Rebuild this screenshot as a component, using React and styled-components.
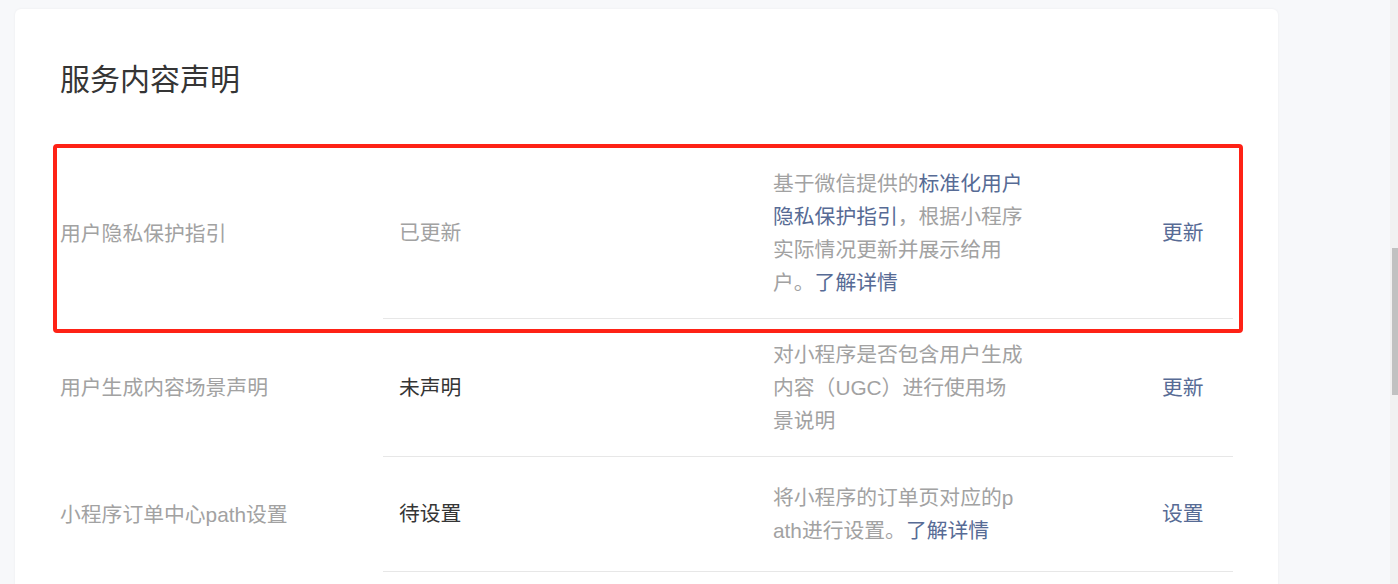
import React from 'react';
import styled, { createGlobalStyle } from 'styled-components';

const GlobalStyle = createGlobalStyle`
  html, body {
    margin: 0;
    padding: 0;
    height: 584px;
    overflow: hidden;
    background: #f7f8fa;
    font-family: "Liberation Sans", "Noto Sans CJK SC", sans-serif;
  }
`;

const Page = styled.div`
  display: flex;
  height: 584px;
`;

const Main = styled.div`
  flex: 1;
  padding: 9px 112px 0 15px;
  overflow: hidden;
`;

const ScrollTrack = styled.div`
  width: 8px;
  background: #f1f1f1;
  display: flex;
  flex-direction: column;
  align-items: flex-end;
  padding-top: 248px;
`;

const ScrollThumb = styled.div`
  width: 6px;
  height: 147px;
  background: #c1c1c1;
`;

const Card = styled.div`
  background: #fff;
  border-radius: 6px;
  box-shadow: 0 0 3px rgba(0, 0, 0, 0.05);
  padding: 45px 45px 40px 45px;
  min-height: 700px;
`;

const Title = styled.h2`
  margin: 0 0 48px 0;
  font-family: "Noto Sans CJK SC", sans-serif;
  font-size: 30px;
  line-height: 46px;
  font-weight: 400;
  color: #353535;
`;

const Row = styled.div`
  position: relative;
  display: grid;
  grid-template-columns: 323px 1fr;
  font-size: 20.8px;
  line-height: 33.3px;

  ${({ marked }) => marked && `
    &::after {
      content: '';
      position: absolute;
      left: -7px;
      top: -4px;
      right: -10px;
      bottom: -14px;
      border: 4px solid #fe2216;
      border-radius: 4px;
      pointer-events: none;
    }
  `}
`;

const Label = styled.div`
  display: flex;
  align-items: center;
  color: #a2a2a2;
`;

const Body = styled.div`
  display: grid;
  grid-template-columns: 374px 389px auto;
  align-items: center;
  padding: 18.5px 0 18.5px 16px;
  min-height: 115px;
  box-sizing: border-box;
  border-bottom: 1px solid #e7e7e7;
`;

const Status = styled.div`
  color: ${({ done }) => (done ? '#a2a2a2' : '#353535')};
`;

const Desc = styled.div`
  width: 251px;
  color: #a2a2a2;
  word-break: break-all;
`;

const Link = styled.a`
  color: #576b95;
  text-decoration: none;
`;

const Action = styled.a`
  color: #576b95;
  text-decoration: none;
`;

const rows = [
  {
    label: '用户隐私保护指引',
    status: '已更新',
    done: true,
    marked: true,
    desc: (
      <>
        基于微信提供的<Link>标准化用户隐私保护指引</Link>，根据小程序实际情况更新并展示给用户。<Link>了解详情</Link>
      </>
    ),
    action: '更新',
  },
  {
    label: '用户生成内容场景声明',
    status: '未声明',
    desc: <>对小程序是否包含用户生成内容（UGC）进行使用场景说明</>,
    action: '更新',
  },
  {
    label: '小程序订单中心path设置',
    status: '待设置',
    desc: (
      <>
        将小程序的订单页对应的path进行设置。<Link>了解详情</Link>
      </>
    ),
    action: '设置',
  },
];

export default function App() {
  return (
    <Page>
      <GlobalStyle />
      <Main>
        <Card>
          <Title>服务内容声明</Title>
          {rows.map((row) => (
            <Row key={row.label} marked={row.marked}>
              <Label>{row.label}</Label>
              <Body>
                <Status done={row.done}>{row.status}</Status>
                <Desc>{row.desc}</Desc>
                <Action>{row.action}</Action>
              </Body>
            </Row>
          ))}
        </Card>
      </Main>
      <ScrollTrack>
        <ScrollThumb />
      </ScrollTrack>
    </Page>
  );
}
